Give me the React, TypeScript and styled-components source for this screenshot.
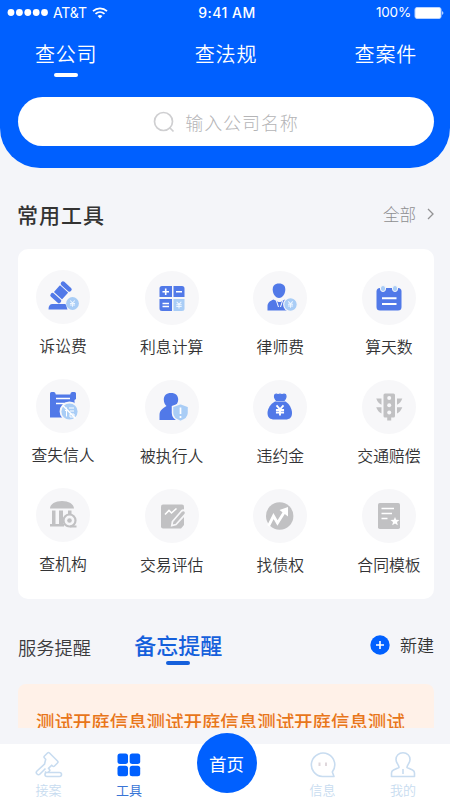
import React from "react";
import styled, { createGlobalStyle } from "styled-components";

const BLUE = "#0060ff";
const INK = "#5179e8";
const PALE = "#a9cdf6";
const GREY = "#c1c1c3";
const DISC = "#f7f7f9";

const GlobalStyle = createGlobalStyle`
  * { box-sizing: border-box; }
  body { margin: 0; background: #f4f5f9; overflow: hidden; }
  svg { display: block; flex: none; }
`;

const Screen = styled.div`
  width: 450px;
  height: 800px;
  display: flex;
  flex-direction: column;
  overflow: hidden;
  background: #f4f5f9;
  color: #333;
  font-family: "Noto Sans CJK SC", sans-serif;
  white-space: nowrap;
`;

const Header = styled.header`
  flex: none;
  height: 168px;
  background: ${BLUE};
  border-radius: 0 0 40px 40px;
  color: #fff;
`;

const StatusBar = styled.div`
  display: grid;
  grid-template-columns: 1fr auto 1fr;
  align-items: center;
  height: 25px;
  padding: 0 6px 0 7px;
  font: 13.5px/25px Inter, sans-serif;
`;

const StatusGroup = styled.div<{ $end?: boolean }>`
  display: flex;
  align-items: center;
  justify-content: ${(p) => (p.$end ? "flex-end" : "flex-start")};
  gap: ${(p) => (p.$end ? "3px" : "5px")};
  font-size: ${(p) => (p.$end ? "13.5px" : "14px")};
  letter-spacing: ${(p) => (p.$end ? "-0.2px" : "-0.1px")};
`;

const Clock = styled.div`
  font-weight: 500;
  font-size: 14px;
  letter-spacing: 0.45px;
  padding-left: 3px;
`;

const SearchTabs = styled.nav`
  display: flex;
  justify-content: space-between;
  height: 72px;
  padding: 14px 33px 0 35px;
`;

const SearchTab = styled.div<{ $active?: boolean }>`
  display: flex;
  flex-direction: column;
  align-items: center;
  font-size: 20px;
  font-weight: 350;
  line-height: 30px;
  letter-spacing: 0.8px;
  &::after {
    content: "";
    width: 24px;
    height: 4px;
    margin-top: 4px;
    border-radius: 2px;
    background: ${(p) => (p.$active ? "#fff" : "transparent")};
  }
`;

const SearchField = styled.div`
  display: flex;
  align-items: center;
  justify-content: center;
  gap: 10px;
  height: 49px;
  margin: 0 16px 0 18px;
  border-radius: 25px;
  background: #fff;
  color: #b4b4b6;
  font-size: 18px;
  font-weight: 300;
  letter-spacing: 0.9px;
`;

const SectionHead = styled.div`
  flex: none;
  display: flex;
  align-items: center;
  justify-content: space-between;
  height: 81px;
  padding: 10px 15px 0 17px;
`;

const SectionTitle = styled.h2`
  margin: 0;
  font-size: 21px;
  font-weight: 500;
  letter-spacing: 1px;
`;

const MoreLink = styled.div`
  display: flex;
  align-items: center;
  gap: 10px;
  color: #8e8e90;
  font-size: 16.5px;
  font-weight: 300;
`;

const ToolCard = styled.section`
  flex: none;
  display: grid;
  grid-template-columns: repeat(4, 90px);
  grid-template-rows: 108.5px 109.5px 90px;
  justify-content: space-between;
  height: 350px;
  margin: 0 16px 0 18px;
  padding-top: 22px;
  border-radius: 10px;
  background: #fff;
`;

const Tool = styled.div`
  display: flex;
  flex-direction: column;
  align-items: center;
  gap: 10px;
  font-size: 15.8px;
  line-height: 24px;
  font-weight: 350;
  color: #333335;
  &:nth-child(4n + 1) { margin-top: -1px; }
`;

const Disc = styled.div`
  display: flex;
  flex: none;
  width: 54px;
  height: 54px;
  border-radius: 50%;
  background: ${DISC};
`;

const ReminderBar = styled.div`
  flex: none;
  display: flex;
  align-items: flex-start;
  height: 85px;
  padding: 30px 16px 0 18px;
`;

const ReminderTab = styled.div<{ $active?: boolean }>`
  display: flex;
  flex-direction: column;
  align-items: center;
  margin-left: ${(p) => (p.$active ? "43px" : "0")};
  margin-top: ${(p) => (p.$active ? "0" : "3px")};
  color: ${(p) => (p.$active ? "#1560dc" : "#3b3b3d")};
  font-size: ${(p) => (p.$active ? "22px" : "18.3px")};
  font-weight: ${(p) => (p.$active ? 500 : 350)};
  line-height: 30px;
  &::after {
    content: "";
    width: 24px;
    height: 4px;
    margin-top: 2px;
    border-radius: 2px;
    background: ${(p) => (p.$active ? "#1560dc" : "transparent")};
  }
`;

const NewButton = styled.div`
  display: flex;
  align-items: center;
  gap: 10px;
  margin-left: auto;
  height: 31px;
  font-size: 17px;
  font-weight: 350;
`;

const Memo = styled.article`
  flex: none;
  height: 44px;
  margin: 0 16px 0 18px;
  padding: 24px 18px 0;
  overflow: hidden;
  border-radius: 8px 8px 0 0;
  background: #fff1e8;
  color: #e8761a;
  font-size: 18.45px;
  font-weight: 500;
  line-height: 27px;
`;

const BottomNav = styled.nav`
  flex: none;
  display: grid;
  grid-template-columns: 89px 72px 123px 69px 92px;
  height: 56px;
  margin-top: 16px;
  padding-left: 4px;
  background: #fff;
`;

const NavItem = styled.div<{ $active?: boolean }>`
  display: flex;
  flex-direction: column;
  align-items: center;
  padding-top: 7px;
  gap: 2px;
  color: ${(p) => (p.$active ? "#3975d6" : "#c8dcf0")};
  font-size: 13px;
  line-height: 18px;
  font-weight: ${(p) => (p.$active ? 400 : 350)};
`;

const HomeButton = styled.div`
  display: flex;
  align-items: center;
  justify-content: center;
  justify-self: center;
  width: 60px;
  height: 60px;
  margin-top: -11px;
  border-radius: 50%;
  background: ${BLUE};
  color: #fff;
  font-size: 17.5px;
`;

const YenLines = ({ x, y, s = 1, color = "#eef6ff", w = 1.2 }: { x: number; y: number; s?: number; color?: string; w?: number }) => (
  <path
    transform={`translate(${x} ${y}) scale(${s})`}
    d="M-2.6-3.4 0-.5 2.6-3.4M-3 0H3M-3 1.9H3M0-.5V4"
    fill="none"
    stroke={color}
    strokeWidth={w}
  />
);

/* Tool glyphs are drawn on the same 54-unit square as the disc behind them. */
const glyphs: Record<string, React.ReactNode> = {
  gavel: (
    <>
      <g transform="translate(25 22.3) rotate(42)" fill={INK}>
        <rect x="-6.500" y="-10" width="13" height="4.400" rx="2" />
        <rect x="-5.500" y="-4.600" width="11" height="9.200" rx=".5" />
        <rect x="-6.500" y="5.600" width="13" height="4.400" rx="2" />
      </g>
      <path d="M16.500 34h12.500q1.500 0 1.500 2.500l1 3H12.500q0-5.500 4-5.500Z" fill={INK} />
      <circle cx="36.500" cy="33.500" r="6.400" fill={PALE} />
      <YenLines x={36.5} y={33.4} s={0.85} />
    </>
  ),
  calc: (
    <>
      <path d="M17 15h10v11H14.500V17.500Q14.500 15 17 15ZM28.500 15H37q2.500 0 2.500 2.500V26h-11ZM14.500 28H27v12H17q-2.500 0-2.500-2.500Z" fill={INK} />
      <path d="M28.500 28h11v9.500Q39.500 40 37 40h-8.500Z" fill={PALE} />
      <path d="M17.500 20.700h6.500M20.700 17.500V24M31 20.700h6M17.500 32.500h6.500M17.500 35.500h6.500" stroke="#fff" strokeWidth="1.600" />
      <YenLines x={34} y={33.8} s={0.9} />
    </>
  ),
  lawyer: (
    <>
      <path d="M26 12.500c4.500 0 6.300 2.500 6.300 6 0 4-2.500 8.500-6.300 8.500s-6.300-4.500-6.300-8.500c0-3.500 1.800-6 6.300-6Z" fill={INK} />
      <path d="M20.500 28.500 25.500 31h2l4.500-2.500 4 2v9H14.500v-4c0-4 2.500-5.500 6-7Z" fill={INK} />
      <path d="m23.500 30 2 6M29.500 30l-2 6" fill="none" stroke="#fff" strokeWidth="1" />
      <circle cx="37.500" cy="33.500" r="6.800" fill={PALE} stroke={DISC} strokeWidth="1.200" />
      <YenLines x={37.5} y={33.3} s={0.85} />
    </>
  ),
  calendar: (
    <>
      <rect x="14.500" y="17" width="25" height="22.500" rx="3.500" fill={INK} />
      <rect x="18.500" y="14.500" width="5" height="6" rx="2.500" fill={PALE} stroke={DISC} />
      <rect x="30.500" y="14.500" width="5" height="6" rx="2.500" fill={PALE} stroke={DISC} />
      <path d="M20 27.300h14.500M20 33h14.500" stroke="#fff" strokeWidth="1.900" />
    </>
  ),
  dishonest: (
    <>
      <path d="M14 14.500q0-1.500 1.500-1.500h2.500q1.500 0 1.800 2.500h14.400q.3-2.500 1.800-2.500h2.500q1.500 0 1.500 1.500V20l-1.500 1v17.500H14Z" fill={INK} />
      <path d="M20 19.500h14M20 24.500h10" stroke="#fff" strokeWidth="1.700" />
      <circle cx="33.500" cy="32.500" r="9" fill={PALE} stroke={DISC} strokeWidth="1.800" />
      <path d="M30.500 28.500v9M29 31.500h2M33 29h5M34 32h4M34 35h4v3h-4Z" stroke="#fff" strokeWidth="1" fill="none" />
      <path d="m27 26.500 12.500 13" stroke="#fff" strokeWidth="1.500" />
    </>
  ),
  executed: (
    <>
      <path d="M26 13c4.700 0 7.200 2.700 7.200 6.500 0 2.700-1.500 5-3.200 6.500l7 4v10H14.500v-4.500c0-5 2.500-6.500 7-9.500-1.700-1.500-2.700-3.800-2.700-6.500 0-3.800 2.500-6.500 7.200-6.500Z" fill={INK} />
      <path d="m35.500 23.500 8 3v6.500c0 4.500-3.500 7-8 8.500-4.500-1.500-8-4-8-8.500v-6.500Z" fill={PALE} stroke={DISC} strokeWidth="1.500" />
      <path d="M35.500 27.500v6.500M35.500 36v2" stroke="#fff" strokeWidth="1.700" />
    </>
  ),
  bag: (
    <>
      <path d="M22 14.500q1.500-.8 3 .3 2-1.200 4 0 2-1.200 3.500-.3 1.500 2.500-1.300 6h-7.900q-2.800-3.500-1.300-6Z" fill={INK} stroke={INK} strokeWidth="1.200" strokeLinejoin="round" />
      <path d="M22 21.500h10.500c3.500 2 6.500 7 6.500 11.500s-2.500 6.500-6.500 6.500H21.500c-4.500 0-7-2-7-6.500 0-4.500 3.500-9.500 7.500-11.500Z" fill={INK} />
      <YenLines x={27} y={30} s={1.35} color="#fff" w={1.4} />
    </>
  ),
  traffic: (
    <>
      <path d="M23 13.500h8.500q1.500 0 1.500 1.500v21q0 1.500-1.500 1.500h-2.300V40.500h-4v-3H23q-1.500 0-1.500-1.500V15q0-1.500 1.500-1.500Z" fill={GREY} />
      <path d="M14.200 18.500h5.300v6.300q-3.500-1.500-5.300-6.300ZM14.200 27.300h5.300v6.300q-3.500-1.500-5.300-6.300ZM40.300 18.500H35v6.300q3.500-1.500 5.300-6.300ZM40.300 27.300H35v6.300q3.500-1.500 5.300-6.300Z" fill={GREY} />
      <g fill={DISC}><circle cx="27.200" cy="18" r="2" /><circle cx="27.200" cy="25.200" r="2" /><circle cx="27.200" cy="32.500" r="2" /></g>
    </>
  ),
  bank: (
    <>
      <path d="M14 20.500C14 16 19.500 13 26 13s12 3 12 7.500ZM16 22.500h3.500V36H16ZM23 22.500h4V36h-4ZM32 22.500h3.500V26H32ZM14 36h14v2.500H14Z" fill={GREY} />
      <circle cx="33.500" cy="32.500" r="6" fill={DISC} stroke={GREY} strokeWidth="2.200" />
      <circle cx="33.500" cy="32.500" r="2.300" fill={GREY} />
      <path d="M34 38.500h6.500" stroke={GREY} strokeWidth="2" />
    </>
  ),
  evaluate: (
    <>
      <path d="M18 15.500h19q2 0 2 2V36l-3 3.500H18q-2 0-2-2v-20q0-2 2-2Z" fill={GREY} />
      <path d="m20 25.500 4-4 2.500 2.500 5-4.500" fill="none" stroke="#fff" strokeWidth="1.600" />
      <path d="m27.500 32.500 9-10.500q1.700-1.500 3.300 0t.4 3.400L31 35.500l-4.200 1Z" fill={GREY} stroke={DISC} strokeWidth="1.700" />
    </>
  ),
  debt: (
    <>
      <circle cx="26.700" cy="27" r="13.700" fill={GREY} />
      <path d="m15.500 37 5-10 4 7 7.500-12" fill="none" stroke="#fff" strokeWidth="2.800" strokeLinejoin="miter" />
      <path d="m26.500 21 8.500-3v9.500Z" fill="#fff" />
    </>
  ),
  contract: (
    <>
      <rect x="16" y="14" width="22" height="26" rx="1.800" fill={GREY} />
      <path d="M19.500 19.500H32M19.500 24.500H30M19.500 29.500h6" stroke="#fff" strokeWidth="1.700" />
      <path d="m33 28 1.200 2.700 3.300.3-2.500 2 .8 3.300-2.800-1.800-2.800 1.800.8-3.300-2.500-2 3.300-.3Z" fill="#fff" />
    </>
  ),
};

const tools = [
  ["诉讼费", "gavel"], ["利息计算", "calc"], ["律师费", "lawyer"], ["算天数", "calendar"],
  ["查失信人", "dishonest"], ["被执行人", "executed"], ["违约金", "bag"], ["交通赔偿", "traffic"],
  ["查机构", "bank"], ["交易评估", "evaluate"], ["找债权", "debt"], ["合同模板", "contract"],
];

const SignalDots = () => (
  <svg width="41" height="9" viewBox="0 0 41 9" fill="#fff">
    {[4, 12.4, 20.8, 29.2, 37.5].map((x) => <circle key={x} cx={x} cy="4.500" r="3.400" />)}
  </svg>
);

const Wifi = () => (
  <svg width="16" height="12" viewBox="0 0 16 12" fill="none" stroke="#fff" strokeWidth="1.700">
    <path d="M1 4.200c4-3.800 10-3.800 14 0M3.500 6.900c2.600-2.500 6.400-2.500 9 0" />
    <path d="M5.600 8.900q2.400-1.900 4.800 0L8 11.500Z" fill="#fff" stroke="none" />
  </svg>
);

const Battery = () => (
  <svg width="30" height="12" viewBox="0 0 30 12" fill="#fff">
    <rect x="1" y=".500" width="26" height="11" rx="2" stroke="#b8d2ff" />
    <path d="M28.300 4q2 2 0 4Z" />
  </svg>
);

const navLine = { fill: "none", stroke: "#c8dcf0", strokeWidth: 1.6, strokeLinejoin: "round" as const };

const NavGavel = () => (
  <svg width="28" height="28" viewBox="0 0 28 28" {...navLine}>
    <path d="m9.500 5 3-3q1-1 2 0l8 8q1 1 0 2l-3 3q-1 1-2 0l-.8-.8-3.200 3.200.8.8q1 1 0 2L13 21.500q-1 .8-2 0l-1-1M9.500 5q-1 1 0 2l1.200 1.200-1.200 5L2 20q-1.500 1.500 0 3t3 0l5.500-5.500" />
    <rect x="10" y="21.500" width="16.500" height="4" rx="2" fill="#fff" />
  </svg>
);

const NavTools = () => (
  <svg width="28" height="28" viewBox="0 0 28 28" fill={BLUE}>
    <rect x="2.500" y="2.500" width="10.500" height="10.500" rx="2.500" />
    <rect x="14.700" y="2.500" width="10.500" height="10.500" rx="2.500" />
    <rect x="2.500" y="14.700" width="10.500" height="10.500" rx="2.500" />
    <rect x="14.700" y="14.700" width="10.500" height="10.500" rx="2.500" />
  </svg>
);

const NavChat = () => (
  <svg width="28" height="28" viewBox="0 0 28 28" {...navLine}>
    <path d="M25 25.500H13.500a11.700 11.700 0 1 1 9.800-4.500Z" />
    <path d="M10.500 11.500v3.500M17 11.500v3.500" stroke="#dfd7dc" strokeWidth="2" />
  </svg>
);

const NavUser = () => (
  <svg width="28" height="28" viewBox="0 0 28 28" {...navLine}>
    <path d="M14 1.800c4.300 0 7 3 7 6.700 0 3.500-3 5.500-3 8l5.500 2.500q2 1 2 3v3.500h-23V22q0-2 2-3l5.500-2.500c0-2.500-3-4.500-3-8 0-3.700 2.700-6.700 7-6.700ZM14 18v5" />
  </svg>
);

export default function App() {
  return (
    <Screen>
      <GlobalStyle />
      <Header>
        <StatusBar>
          <StatusGroup><SignalDots /><span>AT&amp;T</span><Wifi /></StatusGroup>
          <Clock>9:41 AM</Clock>
          <StatusGroup $end><span>100%</span><Battery /></StatusGroup>
        </StatusBar>
        <SearchTabs>
          <SearchTab $active>查公司</SearchTab>
          <SearchTab>查法规</SearchTab>
          <SearchTab>查案件</SearchTab>
        </SearchTabs>
        <SearchField>
          <svg width="22" height="22" viewBox="0 0 22 22" fill="none" stroke="#cfcfd1" strokeWidth="1.700">
            <circle cx="10.500" cy="10.500" r="9" /><path d="m16.500 16.500 4 4" />
          </svg>
          输入公司名称
        </SearchField>
      </Header>
      <SectionHead>
        <SectionTitle>常用工具</SectionTitle>
        <MoreLink>
          全部
          <svg width="9" height="12" viewBox="0 0 9 12" fill="none" stroke="#929294" strokeWidth="1.300">
            <path d="m2 1 5 5-5 5" />
          </svg>
        </MoreLink>
      </SectionHead>
      <ToolCard>
        {tools.map(([label, glyph]) => (
          <Tool key={glyph}>
            <Disc><svg width="54" height="54" viewBox="0 0 54 54">{glyphs[glyph]}</svg></Disc>
            {label}
          </Tool>
        ))}
      </ToolCard>
      <ReminderBar>
        <ReminderTab>服务提醒</ReminderTab>
        <ReminderTab $active>备忘提醒</ReminderTab>
        <NewButton>
          <svg width="20" height="20" viewBox="0 0 20 20">
            <circle cx="10" cy="10" r="9.700" fill={BLUE} />
            <path d="M6 10h8M10 6v8" stroke="#fff" strokeWidth="1.600" />
          </svg>
          新建
        </NewButton>
      </ReminderBar>
      <Memo>测试开庭信息测试开庭信息测试开庭信息测试</Memo>
      <BottomNav>
        <NavItem><NavGavel />接案</NavItem>
        <NavItem $active><NavTools />工具</NavItem>
        <HomeButton>首页</HomeButton>
        <NavItem><NavChat />信息</NavItem>
        <NavItem><NavUser />我的</NavItem>
      </BottomNav>
    </Screen>
  );
}
